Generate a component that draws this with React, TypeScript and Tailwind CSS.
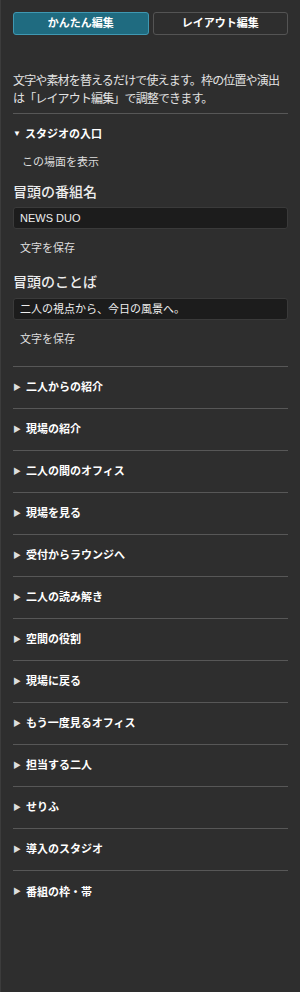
import { useState } from "react";

const sections = [
  "二人からの紹介",
  "現場の紹介",
  "二人の間のオフィス",
  "現場を見る",
  "受付からラウンジへ",
  "二人の読み解き",
  "空間の役割",
  "現場に戻る",
  "もう一度見るオフィス",
  "担当する二人",
  "せりふ",
  "導入のスタジオ",
  "番組の枠・帯",
];

function Field({ label, value, first }: { label: string; value: string; first?: boolean }) {
  return (
    <div>
      <div className={first ? "text-[14px] leading-[20px] font-medium text-[#ececec] mt-[12px]" : "text-[14px] leading-[20px] font-medium text-[#ececec] mt-[13px]"}>
        {label}
      </div>
      <div className={first ? "mt-[5px] h-[22px] rounded-[3px] border border-[#3a3a3a] bg-[#1c1c1c] px-[6px] flex items-center text-[11px] text-[#eee]" : "mt-[6px] h-[22px] rounded-[3px] border border-[#3a3a3a] bg-[#1c1c1c] px-[6px] flex items-center text-[11px] text-[#eee]"}>
        {value}
      </div>
      <button type="button" className="mt-[11px] px-[7px] text-[11px] leading-[16px] text-[#ddd]">
        文字を保存
      </button>
    </div>
  );
}

export default function App() {
  const [mode, setMode] = useState<"easy" | "layout">("easy");

  return (
    <div
      className="min-h-[992px] w-[300px] bg-[#2e2e2e] border-l border-[#3c3c3c] px-[12px] pt-[12px] text-[#e6e6e6]"
      style={{ fontFamily: '"Liberation Sans", "Noto Sans CJK JP", sans-serif' }}
    >
      <div className="grid grid-cols-2 gap-[4px]">
        <button
          type="button"
          onClick={() => setMode("easy")}
          className={
            mode === "easy"
              ? "h-[23px] rounded-[3px] border border-[#3f98b2] bg-[#1f6b80] text-[11px] font-bold text-white"
              : "h-[23px] rounded-[3px] border border-[#545454] text-[11px] font-bold text-white"
          }
        >
          かんたん編集
        </button>
        <button
          type="button"
          onClick={() => setMode("layout")}
          className={
            mode === "layout"
              ? "h-[23px] rounded-[3px] border border-[#3f98b2] bg-[#1f6b80] text-[11px] font-bold text-white"
              : "h-[23px] rounded-[3px] border border-[#545454] text-[11px] font-bold text-white"
          }
        >
          レイアウト編集
        </button>
      </div>

      <p className="mt-[37px] text-[12px] leading-[18px] tracking-[-0.85px] text-[#e2e2e2]">
        文字や素材を替えるだけで使えます。枠の位置や演出は「レイアウト編集」で調整できます。
      </p>

      <div className="mt-[5px] border-t border-[#575757]" />

      <div className="pt-[12px] pb-[16px] border-b border-[#575757]">
        <div className="flex items-center gap-[4px] text-[11px] leading-[16px] font-bold text-white">
          <span className="text-[8px]">▼</span>
          <span>スタジオの入口</span>
        </div>
        <div className="mt-[12px] pl-[9px] text-[11px] leading-[16px] text-[#ddd]">この場面を表示</div>
        <Field label="冒頭の番組名" value="NEWS DUO" first />
        <Field label="冒頭のことば" value="二人の視点から、今日の風景へ。" />
      </div>

      {sections.map((s, i) => (
        <div
          key={s}
          className={
            i === sections.length - 1
              ? "h-[42px] flex items-center gap-[5px] text-[11px] font-bold text-white"
              : "h-[42px] flex items-center gap-[5px] text-[11px] font-bold text-white border-b border-[#575757]"
          }
        >
          <span className="text-[8px] text-[#ddd]">▶</span>
          <span>{s}</span>
        </div>
      ))}
    </div>
  );
}
